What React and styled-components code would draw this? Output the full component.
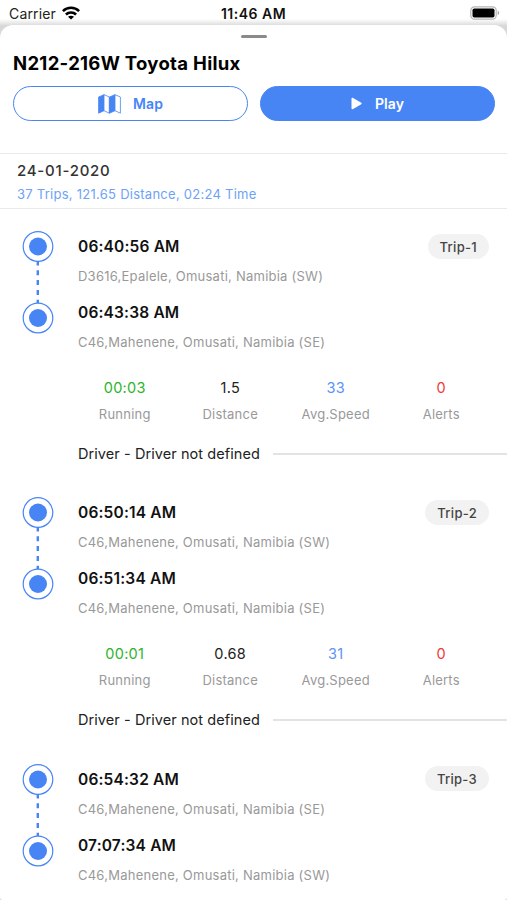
import styled, { createGlobalStyle } from 'styled-components'

const GlobalStyle = createGlobalStyle`
* {
  box-sizing: border-box;
}
body {
  margin: 0;
  background: #fff;
  font-family: Inter, 'Liberation Sans', sans-serif;
  color: #111;
}
p, h1, h2 {
  margin: 0;
  white-space: nowrap;
}
`
const Screen = styled.main`
  display: flex;
  flex-direction: column;
  height: 900px;
  overflow: hidden;
  background: #fff;
`
const StatusBar = styled.header`
  display: grid;
  grid-template-columns: 1fr auto 1fr;
  align-items: center;
  flex: none;
  height: 25px;
  padding: 3px 9px 0 9px;
  background: linear-gradient(#fff 19px, #dedede);
`
const Carrier = styled.div`
  display: flex;
  align-items: center;
  gap: 6px;
  font-size: 14px;
  line-height: 20px;
  letter-spacing: 0.15px;
  color: #222;
`
const Clock = styled.p`
  font-size: 14px;
  font-weight: 600;
  line-height: 20px;
  letter-spacing: 0.5px;
`
const Wifi = styled.svg`
  margin-top: -2px;
`
const Battery = styled.svg`
  justify-self: end;
  margin: -2px -2px 0 0;
`
const Backdrop = styled.div`
  flex: 1;
  min-height: 0;
  display: flex;
  background: #d8d8d8;
`
const Sheet = styled.section`
  flex: 1;
  min-width: 0;
  overflow: hidden;
  border-radius: 13px 13px 3px 3px;
  background: #fff;
`
const Handle = styled.div`
  width: 26px;
  height: 3px;
  margin: 10px auto 0;
  border-radius: 2px;
  background: #8a8a8a;
`
const Title = styled.h1`
  margin: 13px 0 0 13px;
  font-size: 18.5px;
  font-weight: 650;
  line-height: 25px;
  letter-spacing: 0.3px;
  color: #000;
`
const Actions = styled.div`
  display: flex;
  gap: 12px;
  padding: 10px 12px 32px 13px;
`
const Button = styled.button`
  flex: 1;
  display: flex;
  align-items: center;
  justify-content: center;
  gap: 12px;
  height: 35px;
  padding: 0;
  border: 1.5px solid #4785f5;
  border-radius: 18px;
  background: ${({ $primary }) => ($primary ? '#4785f5' : '#fff')};
  color: ${({ $primary }) => ($primary ? '#fff' : '#4785f5')};
  font-family: inherit;
  font-size: 14px;
  font-weight: 600;
  letter-spacing: 0.1px;
`
const Summary = styled.div`
  height: 56px;
  padding: 6px 17px 0;
  border-top: 1px solid #e9e9e9;
  border-bottom: 1px solid #e9e9e9;
`
const DateText = styled.h2`
  font-size: 15px;
  font-weight: 500;
  line-height: 21px;
  letter-spacing: 0.75px;
  color: #333;
`
const Totals = styled.p`
  margin-top: 4px;
  font-size: 13px;
  line-height: 18px;
  letter-spacing: 0.26px;
  color: #6da2f8;
`
const TripRow = styled.article`
  display: flex;
  height: 266.3px;
`
const Track = styled.div`
  flex: none;
  width: 78px;
  padding: 22px 0 0 22px;
`
const Body = styled.div`
  flex: 1;
  min-width: 0;
  padding-top: 26px;
`
const TopLine = styled.div`
  display: flex;
  align-items: center;
  justify-content: space-between;
  height: 24px;
  padding-right: 18px;
`
const Time = styled.p`
  font-size: 15.5px;
  font-weight: 600;
  line-height: 24px;
  letter-spacing: 0.17px;
  color: #111;
`
const Address = styled.p`
  margin: 7px 0 15px;
  font-size: 13px;
  line-height: 20px;
  letter-spacing: 0.24px;
  color: #999;
`
const Badge = styled.span`
  height: 25px;
  margin-top: -2px;
  padding: 0 12px;
  border-radius: 13px;
  background: #f2f2f2;
  font-size: 13px;
  font-weight: 500;
  line-height: 26px;
  letter-spacing: 0.3px;
  color: #444;
`
const Stats = styled.div`
  display: grid;
  grid-template-columns: repeat(4, 1fr);
  margin: 26px 13px 0 -6px;
  text-align: center;
`
const StatValue = styled.p`
  font-size: 14.5px;
  line-height: 20px;
  letter-spacing: 0.3px;
  color: ${({ $color }) => $color};
`
const StatLabel = styled.p`
  margin-top: 7px;
  font-size: 13px;
  line-height: 18px;
  letter-spacing: 0.22px;
  color: #999;
`
const Driver = styled.div`
  display: flex;
  align-items: center;
  gap: 13px;
  margin-top: 21px;
  font-size: 14.5px;
  line-height: 20px;
  letter-spacing: 0.07px;
  color: #222;
  white-space: nowrap;

  &::after {
    content: '';
    flex: 1;
    height: 2px;
    background: #e3e3e3;
  }
`

const trips = [
  {
    name: 'Trip-1',
    start: '06:40:56 AM',
    from: 'D3616,Epalele, Omusati, Namibia (SW)',
    end: '06:43:38 AM',
    to: 'C46,Mahenene, Omusati, Namibia (SE)',
    running: '00:03',
    distance: '1.5',
    speed: '33',
    alerts: '0',
  },
  {
    name: 'Trip-2',
    start: '06:50:14 AM',
    from: 'C46,Mahenene, Omusati, Namibia (SW)',
    end: '06:51:34 AM',
    to: 'C46,Mahenene, Omusati, Namibia (SE)',
    running: '00:01',
    distance: '0.68',
    speed: '31',
    alerts: '0',
  },
  {
    name: 'Trip-3',
    start: '06:54:32 AM',
    from: 'C46,Mahenene, Omusati, Namibia (SE)',
    end: '07:07:34 AM',
    to: 'C46,Mahenene, Omusati, Namibia (SW)',
  },
]

const WifiIcon = () => (
  <Wifi width='18' height='14' viewBox='0 0 18 14' fill='none' stroke='#000' strokeWidth='2.5'>
    <path d='M.9 5.2C5.4.7 12.6.7 17.1 5.2' />
    <path d='M3.9 8.5c2.8-2.8 7.4-2.8 10.2 0' />
    <path d='M9 13.6 6 10.8c1.7-1.5 4.3-1.5 6 0Z' fill='#000' stroke='none' />
  </Wifi>
)

const BatteryIcon = () => (
  <Battery width='30' height='14' viewBox='0 0 30 14'>
    <rect x='.8' y='.8' width='25.4' height='12.4' rx='3.6' fill='#fff' stroke='#b5b5b5' strokeWidth='1.2' />
    <rect x='2.5' y='2.5' width='22' height='9' rx='1.8' fill='#000' />
    <path d='M27.7 4.8c2 .6 2 3.8 0 4.4Z' fill='#aaa' />
  </Battery>
)

const MapIcon = () => (
  <svg width='23' height='20' viewBox='0 0 23 20' stroke='#4785f5' strokeWidth='.8' strokeLinejoin='round'>
    <path d='M.6 3 6 .7v16L.6 19.2Z' fill='#4785f5' />
    <path d='M6 .7 11.4 3v16.2L6 16.7Z' fill='#fff' />
    <path d='M11.4 3 17 .7v16l-5.6 2.5Z' fill='#4785f5' />
    <path d='M17 .7 22.4 3v16.2L17 16.7Z' fill='#fff' />
  </svg>
)

const PlayIcon = () => (
  <svg width='12' height='13' viewBox='0 0 12 13'>
    <path d='M1.3 1.5v10l8.6-5Z' fill='#fff' stroke='#fff' strokeWidth='1.6' strokeLinejoin='round' />
  </svg>
)

const RouteMarks = () => (
  <svg width='32' height='103' viewBox='0 0 32 103' fill='none' stroke='#4785f5'>
    <circle cx='16' cy='15.5' r='14.8' strokeWidth='1.2' />
    <circle cx='16' cy='15.5' r='9' fill='#4785f5' stroke='none' />
    <path d='M15.8 30v42' strokeWidth='2.4' strokeDasharray='5 4.8' strokeDashoffset='.5' />
    <circle cx='16' cy='87' r='14.8' strokeWidth='1.2' />
    <circle cx='16' cy='87' r='9' fill='#4785f5' stroke='none' />
  </svg>
)

const Stat = ({ value, label, color }) => (
  <div>
    <StatValue $color={color}>{value}</StatValue>
    <StatLabel>{label}</StatLabel>
  </div>
)

const Trip = ({ trip }) => {
  return (
    <TripRow>
      <Track>
        <RouteMarks />
      </Track>
      <Body>
        <TopLine>
          <Time>{trip.start}</Time>
          <Badge>{trip.name}</Badge>
        </TopLine>
        <Address>{trip.from}</Address>
        <Time>{trip.end}</Time>
        <Address>{trip.to}</Address>
        {trip.running && (
          <>
            <Stats>
              <Stat value={trip.running} label='Running' color='#2bb52b' />
              <Stat value={trip.distance} label='Distance' color='#222' />
              <Stat value={trip.speed} label='Avg.Speed' color='#5b93f7' />
              <Stat value={trip.alerts} label='Alerts' color='#ee3b3b' />
            </Stats>
            <Driver>Driver - Driver not defined</Driver>
          </>
        )}
      </Body>
    </TripRow>
  )
}

const App = () => {
  return (
    <Screen>
      <GlobalStyle />
      <StatusBar>
        <Carrier>
          Carrier <WifiIcon />
        </Carrier>
        <Clock>11:46 AM</Clock>
        <BatteryIcon />
      </StatusBar>
      <Backdrop>
        <Sheet>
          <Handle />
          <Title>N212-216W Toyota Hilux</Title>
          <Actions>
            <Button>
              <MapIcon /> Map
            </Button>
            <Button $primary>
              <PlayIcon /> Play
            </Button>
          </Actions>
          <Summary>
            <DateText>24-01-2020</DateText>
            <Totals>37 Trips, 121.65 Distance, 02:24 Time</Totals>
          </Summary>
          {trips.map((trip) => (
            <Trip key={trip.name} trip={trip} />
          ))}
        </Sheet>
      </Backdrop>
    </Screen>
  )
}

export default App
